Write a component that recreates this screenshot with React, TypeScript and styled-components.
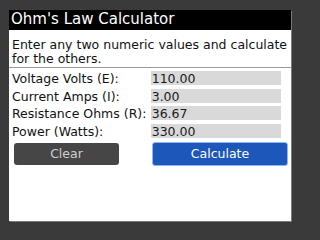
import React, { useState } from "react";
import styled, { createGlobalStyle } from "styled-components";

const GlobalStyle = createGlobalStyle`
  html, body {
    margin: 0;
    padding: 0;
    background: #3a3a3a;
  }
  body {
    font-family: "DejaVu Sans", "Liberation Sans", sans-serif;
  }
`;

const Screen = styled.div`
  width: 300px;
  height: 231px;
  box-sizing: border-box;
  padding: 10px 9px 10px 9px;
  background: #3a3a3a;
`;

const Panel = styled.div`
  height: 211px;
  background: #ffffff;
  box-shadow: 1px 1px 0 #7a7a7a;
  display: flex;
  flex-direction: column;
`;

const TitleBar = styled.div`
  height: 20px;
  line-height: 18px;
  background: #000000;
  color: #ffffff;
  font-size: 15px;
  padding-left: 2px;
  white-space: nowrap;
`;

const Body = styled.div`
  padding: 8px 3px 0 3px;
  color: #111111;
  font-size: 12.5px;
  line-height: 14px;
`;

const Intro = styled.div`
  margin: 0;
`;

const Divider = styled.div`
  height: 1px;
  background: #9a9a9a;
  margin: 1px -3px 3px -3px;
`;

const Fields = styled.div`
  display: grid;
  grid-template-columns: 138.7px 130px;
  row-gap: 3.65px;
`;

const Label = styled.div`
  height: 14px;
  line-height: 15px;
  white-space: nowrap;
`;

const ValueBox = styled.div`
  height: 14px;
  line-height: 15px;
  background: #d9d9d9;
  color: #1a1a1a;
  padding-left: 1px;
`;

const ButtonRow = styled.div`
  display: flex;
  align-items: center;
  gap: 33px;
  padding-left: 2px;
  margin-top: 4px;
`;

const Button = styled.button<{ $primary?: boolean }>`
  font-family: inherit;
  font-size: 12.5px;
  box-sizing: border-box;
  width: ${(p) => (p.$primary ? "136px" : "105px")};
  height: ${(p) => (p.$primary ? "24px" : "22px")};
  border-radius: 3px;
  border: ${(p) => (p.$primary ? "1px solid #8cb8f2" : "none")};
  background: ${(p) => (p.$primary ? "#1d57b9" : "#464646")};
  color: ${(p) => (p.$primary ? "#ffffff" : "#cfcfcf")};
  padding: 0;
  cursor: pointer;
`;

const fields = [
  { label: "Voltage Volts (E):", value: "110.00" },
  { label: "Current Amps (I):", value: "3.00" },
  { label: "Resistance Ohms (R):", value: "36.67" },
  { label: "Power (Watts):", value: "330.00" },
];

export default function App() {
  const [values] = useState(fields);

  return (
    <>
      <GlobalStyle />
      <Screen>
        <Panel>
          <TitleBar>Ohm's Law Calculator</TitleBar>
          <Body>
            <Intro>
              Enter any two numeric values and calculate
              <br />
              for the others.
            </Intro>
            <Divider />
            <Fields>
              {values.map((f) => (
                <React.Fragment key={f.label}>
                  <Label>{f.label}</Label>
                  <ValueBox>{f.value}</ValueBox>
                </React.Fragment>
              ))}
            </Fields>
            <ButtonRow>
              <Button>Clear</Button>
              <Button $primary>Calculate</Button>
            </ButtonRow>
          </Body>
        </Panel>
      </Screen>
    </>
  );
}
